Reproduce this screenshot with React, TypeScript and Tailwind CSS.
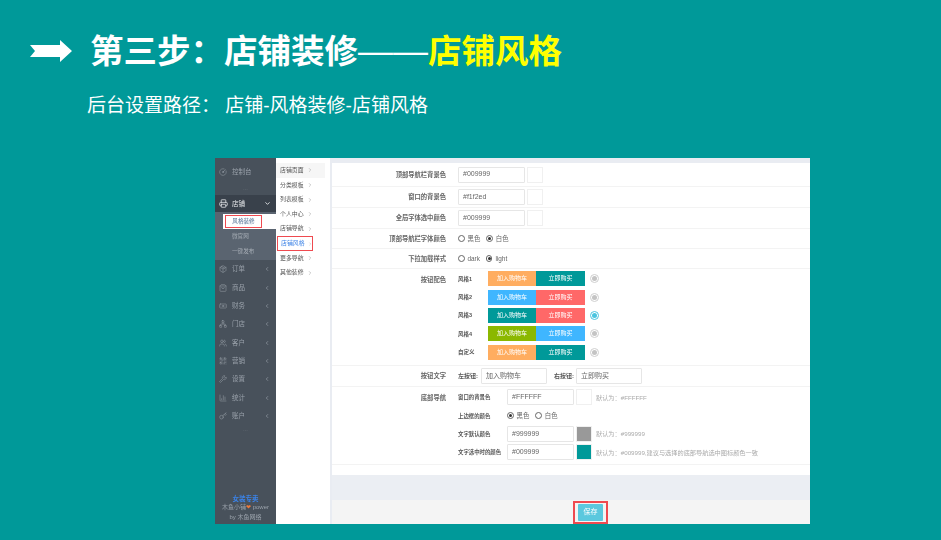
import { BarChart3, ChevronDown, ChevronLeft, ChevronRight, CircleGauge, Banknote, Key, Network, Package, Printer, QrCode, ShoppingBag, Users, Wrench } from "lucide-react";

const cjk = { fontFamily: '"Liberation Sans", "Noto Sans CJK SC", sans-serif' };

const navBefore = [{ label: "控制台", Icon: CircleGauge }];
const navAfter = [
  { label: "订单", Icon: Package },
  { label: "商品", Icon: ShoppingBag },
  { label: "财务", Icon: Banknote },
  { label: "门店", Icon: Network },
  { label: "客户", Icon: Users },
  { label: "营销", Icon: QrCode },
  { label: "设置", Icon: Wrench },
  { label: "统计", Icon: BarChart3 },
  { label: "账户", Icon: Key },
];

const subNav = ["店铺页面", "分类模板", "列表模板", "个人中心", "店铺导航", "店铺风格", "更多导航", "其他装修"];

const styles = [
  { name: "风格1", left: "bg-[#ffad60]", right: "bg-[#009999]", on: false },
  { name: "风格2", left: "bg-[#3fb6ff]", right: "bg-[#ff6868]", on: false },
  { name: "风格3", left: "bg-[#009999]", right: "bg-[#ff6868]", on: true },
  { name: "风格4", left: "bg-[#8bb800]", right: "bg-[#3fb6ff]", on: false },
  { name: "自定义", left: "bg-[#ffad60]", right: "bg-[#009999]", on: false },
];

function Sidebar() {
  return (
    <aside className="flex w-[61px] shrink-0 flex-col bg-[#48515b] text-[6.5px] text-[#9aa2ab]">
      <div className="h-[28px] pt-[5px]">
        {navBefore.map(({ label, Icon }) => (
          <div key={label} className="flex h-[18px] items-center pl-[4px]">
            <Icon size={8} strokeWidth={1.5} />
            <span className="ml-[5px] whitespace-nowrap">{label}</span>
          </div>
        ))}
      </div>
      <div className="h-[9px] text-center text-[6px] leading-[4px] text-[#6d757e]">...</div>
      <div className="flex h-[17px] items-center bg-[#39414b] pr-[5px] pl-[4px] text-[#e8eaec]">
        <Printer size={9} strokeWidth={2} />
        <span className="ml-[4px] flex-1 whitespace-nowrap">店铺</span>
        <ChevronDown size={7} strokeWidth={3} />
      </div>
      <div className="flex h-[48px] flex-col bg-[#5a6470] pt-[2px] pl-[8px]">
        <div className="flex h-[15px] items-center bg-white pl-[2px]">
          <span className="flex h-[13px] w-[37px] items-center justify-center border border-[#ef4a50] text-[5.6px] whitespace-nowrap text-[#4b6a8f]">风格装修</span>
        </div>
        <div className="flex h-[15px] items-center pl-[9px] text-[5.6px] whitespace-nowrap text-[#a4abb3]">微官网</div>
        <div className="flex h-[15px] items-center pl-[9px] text-[5.6px] whitespace-nowrap text-[#a4abb3]">一键发布</div>
      </div>
      <div>
        {navAfter.map(({ label, Icon }) => (
          <div key={label} className="flex h-[18.35px] items-center pr-[6px] pl-[4px]">
            <Icon size={8} strokeWidth={1.5} />
            <span className="ml-[5px] flex-1 whitespace-nowrap">{label}</span>
            <ChevronLeft size={6} strokeWidth={2.5} />
          </div>
        ))}
      </div>
      <div className="mt-[1px] text-center text-[6px] leading-[6px] text-[#6d757e]">...</div>
      <div className="mt-auto flex flex-col items-center pb-[2px] text-[6px] leading-[9.5px]">
        <span className="text-[6.5px] font-bold text-[#3b82e6]">女装专卖</span>
        <span className="whitespace-nowrap">
          木鱼小铺<span className="text-[#f07a3a]">❤</span> power
        </span>
        <span className="whitespace-nowrap">by 木鱼网络</span>
      </div>
    </aside>
  );
}

function SubNav() {
  return (
    <nav className="w-[54px] shrink-0 bg-white pt-[5px] text-[5.9px] text-[#555]">
      {subNav.map((label) => {
        const active = label === "店铺风格";
        return (
          <div
            key={label}
            className={`flex h-[14.65px] items-center whitespace-nowrap ${active ? "ml-[1px] w-[36px] border border-[#ef4a50] pl-[3px] text-[#3b82e6]" : "pl-[4px]"} ${label === "店铺页面" ? "mr-[5px] bg-[#f6f6f6]" : ""}`}
          >
            <span>{label}</span>
            <ChevronRight size={6} className="ml-[3px] text-[#999]" />
          </div>
        );
      })}
    </nav>
  );
}

function TextBox({ value, w = "w-[67px]" }: { value: string; w?: string }) {
  return (
    <div className={`flex h-[16px] ${w} items-center rounded-[1px] border border-[#e6e6e6] bg-white pl-[4px] text-[7px] whitespace-nowrap text-[#666]`}>
      {value}
    </div>
  );
}

function Swatch({ color }: { color?: string }) {
  return <div className={`ml-[2px] h-[16px] w-[16px] border border-[#f0f0f0] ${color ?? "bg-white"}`} />;
}

function Radio({ on, label }: { on?: boolean; label: string }) {
  return (
    <span className="mr-[6px] flex items-center text-[6.4px] whitespace-nowrap text-[#666]">
      <span className="mr-[3px] flex h-[6.5px] w-[6.5px] items-center justify-center rounded-full border border-[#666] bg-white">
        {on && <span className="h-[3px] w-[3px] rounded-full bg-[#333]" />}
      </span>
      {label}
    </span>
  );
}

function Row({ label, h, children }: { label: string; h: string; children: React.ReactNode }) {
  return (
    <div className={`flex ${h} items-center border-b border-[#f3f3f3]`}>
      <div className="w-[114px] shrink-0 text-right text-[6.3px] font-bold whitespace-nowrap text-[#666]">{label}</div>
      <div className="ml-[12px] flex items-center">{children}</div>
    </div>
  );
}

function BottomRow({ label, children }: { label: string; children: React.ReactNode }) {
  return (
    <div className="flex h-[18.4px] items-center">
      <div className="w-[49px] shrink-0 text-[5.4px] font-bold whitespace-nowrap text-[#555]">{label}</div>
      {children}
    </div>
  );
}

function Content() {
  return (
    <main className="flex min-w-0 flex-1 flex-col border-l-2 border-[#e9ecf2] bg-white">
      <div className="h-[5px] bg-[#e9ecf2]" />
      <Row label="顶部导航栏背景色" h="h-[24px]">
        <TextBox value="#009999" />
        <Swatch />
      </Row>
      <Row label="窗口的背景色" h="h-[21px]">
        <TextBox value="#f1f2ed" />
        <Swatch />
      </Row>
      <Row label="全局字体选中颜色" h="h-[21px]">
        <TextBox value="#009999" />
        <Swatch />
      </Row>
      <Row label="顶部导航栏字体颜色" h="h-[20px]">
        <Radio label="黑色" />
        <Radio on label="白色" />
      </Row>
      <Row label="下拉加载样式" h="h-[20px]">
        <Radio label="dark" />
        <Radio on label="light" />
      </Row>
      <div className="flex h-[97px] border-b border-[#f3f3f3] pt-[0.5px]">
        <div className="w-[114px] shrink-0 pt-[4px] text-right text-[6.3px] leading-[11px] font-bold text-[#666]">按钮配色</div>
        <div className="ml-[12px] flex flex-col">
          {styles.map((s) => (
            <div key={s.name} className="flex h-[18.4px] items-center">
              <span className="w-[30px] text-[5.5px] font-bold whitespace-nowrap text-[#555]">{s.name}</span>
              <span className={`flex h-[15px] w-[48px] items-center justify-center text-[6px] whitespace-nowrap text-white ${s.left}`}>加入购物车</span>
              <span className={`flex h-[15px] w-[49px] items-center justify-center text-[6px] whitespace-nowrap text-white ${s.right}`}>立即购买</span>
              <span className={`ml-[5px] flex h-[9px] w-[9px] items-center justify-center rounded-full border ${s.on ? "border-[#4cc5df]" : "border-[#cfcfcf]"}`}>
                <span className={`h-[5px] w-[5px] rounded-full ${s.on ? "bg-[#4cc5df]" : "bg-[#c4c4c4]"}`} />
              </span>
            </div>
          ))}
        </div>
      </div>
      <Row label="按钮文字" h="h-[21px]">
        <span className="w-[23px] text-[6px] font-bold whitespace-nowrap text-[#555]">左按钮:</span>
        <TextBox value="加入购物车" w="w-[66px]" />
        <span className="ml-[7px] w-[22px] text-[6px] font-bold whitespace-nowrap text-[#555]">右按钮:</span>
        <TextBox value="立即购买" w="w-[66px]" />
      </Row>
      <div className="flex h-[78px] border-b border-[#f3f3f3] pt-[1px]">
        <div className="w-[114px] shrink-0 pt-[4px] text-right text-[6.3px] leading-[11px] font-bold text-[#666]">底部导航</div>
        <div className="ml-[12px] flex flex-col">
          <BottomRow label="窗口的背景色">
            <TextBox value="#FFFFFF" />
            <Swatch />
            <span className="ml-[4px] text-[6.2px] whitespace-nowrap text-[#aaa]">默认为：#FFFFFF</span>
          </BottomRow>
          <BottomRow label="上边框的颜色">
            <Radio on label="黑色" />
            <Radio label="白色" />
          </BottomRow>
          <BottomRow label="文字默认颜色">
            <TextBox value="#999999" />
            <Swatch color="bg-[#999999]" />
            <span className="ml-[4px] text-[6.2px] whitespace-nowrap text-[#aaa]">默认为：#999999</span>
          </BottomRow>
          <BottomRow label="文字选中时的颜色">
            <TextBox value="#009999" />
            <Swatch color="bg-[#009999]" />
            <span className="ml-[4px] text-[6.2px] whitespace-nowrap text-[#aaa]">默认为：#009999,建议与选择的底部导航选中图标颜色一致</span>
          </BottomRow>
        </div>
      </div>
      <div className="h-[10px]" />
      <div className="h-[25px] bg-[#ebeef3]" />
      <div className="flex flex-1 items-center justify-center bg-[#f4f4f4]">
        <div className="ml-[39px] flex h-[23px] w-[35px] items-center justify-center border-2 border-[#ef4a50]">
          <span className="flex h-[17px] w-[25px] items-center justify-center rounded-[1px] bg-[#5bc8de] text-[7px] whitespace-nowrap text-white">保存</span>
        </div>
      </div>
    </main>
  );
}

export default function App() {
  return (
    <div className="flex h-[540px] w-[941px] flex-col overflow-hidden bg-[#009999]" style={cjk}>
      <header className="flex h-[158px] shrink-0 flex-col pt-[30px]">
        <div className="flex h-[42px] items-center pl-[30px]">
          <svg width="42" height="22" viewBox="0 0 42 22" className="shrink-0">
            <path d="M0 5 H30 V0 L42 11 L30 22 V17 H0 L5 11 Z" fill="#fff" />
          </svg>
          <h1 className="ml-[18px] text-[33.5px] leading-[42px] font-bold whitespace-nowrap text-white">
            第三步：店铺装修<span className="text-[35px] font-normal">——</span><span className="text-[#ffff00]">店铺风格</span>
          </h1>
        </div>
        <p className="mt-[20px] ml-[87px] text-[19px] leading-[28px] whitespace-pre text-white">后台设置路径： 店铺-风格装修-店铺风格</p>
      </header>
      <div className="ml-[215px] flex h-[366px] w-[595px] shrink-0 overflow-hidden blur-[0.4px]">
        <Sidebar />
        <SubNav />
        <Content />
      </div>
    </div>
  );
}
